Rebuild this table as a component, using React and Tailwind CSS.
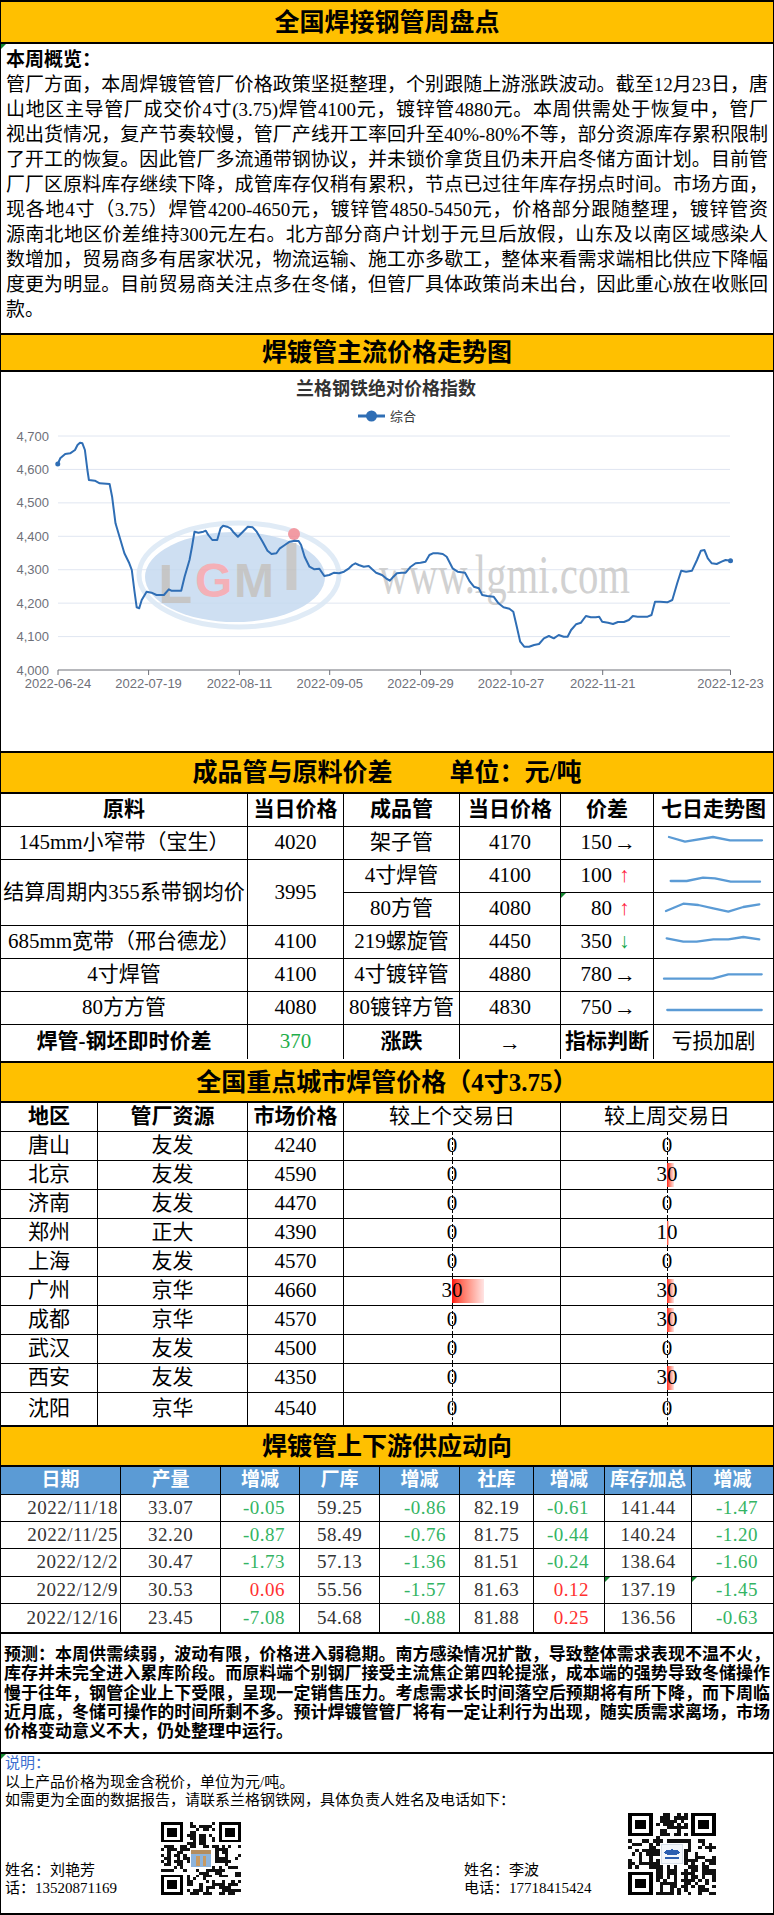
const song = "font-['Liberation_Serif','Noto_Sans_CJK_SC',serif]";

const overview = [
  '管厂方面，本周焊镀管管厂价格政策坚挺整理，个别跟随上游涨跌波动。截至12月23日，唐',
  '山地区主导管厂成交价4寸(3.75)焊管4100元，镀锌管4880元。本周供需处于恢复中，管厂',
  '视出货情况，复产节奏较慢，管厂产线开工率回升至40%-80%不等，部分资源库存累积限制',
  '了开工的恢复。因此管厂多流通带钢协议，并未锁价拿货且仍未开启冬储方面计划。目前管',
  '厂厂区原料库存继续下降，成管库存仅稍有累积，节点已过往年库存拐点时间。市场方面，',
  '现各地4寸（3.75）焊管4200-4650元，镀锌管4850-5450元，价格部分跟随整理，镀锌管资',
  '源南北地区价差维持300元左右。北方部分商户计划于元旦后放假，山东及以南区域感染人',
  '数增加，贸易商多有居家状况，物流运输、施工亦多歇工，整体来看需求端相比供应下降幅',
  '度更为明显。目前贸易商关注点多在冬储，但管厂具体政策尚未出台，因此重心放在收账回',
];

const forecast = [
  '预测：本周供需续弱，波动有限，价格进入弱稳期。南方感染情况扩散，导致整体需求表现不温不火，',
  '库存并未完全进入累库阶段。而原料端个别钢厂接受主流焦企第四轮提涨，成本端的强势导致冬储操作',
  '慢于往年，钢管企业上下受限，呈现一定销售压力。考虑需求长时间落空后预期将有所下降，而下周临',
  '近月底，冬储可操作的时间所剩不多。预计焊镀管管厂将有一定让利行为出现，随实质需求离场，市场',
];

// trace of the index line, in reference pixels (x * 2.026, y * 3)
const series = [
  [115, 402], [120, 385], [130, 372], [140, 370], [150, 360], [155, 345], [160, 338], [165, 340],
  [170, 360], [175, 420], [178, 450], [190, 452], [200, 460], [220, 462], [225, 500], [232, 580],
  [240, 620], [250, 670], [260, 700], [265, 720], [270, 780], [275, 832], [280, 835], [285, 810],
  [295, 785], [305, 788], [315, 795], [330, 795], [340, 778], [345, 782], [365, 782], [372, 740],
  [382, 690], [387, 650], [392, 605], [400, 608], [410, 605], [415, 602], [420, 615], [428, 630],
  [438, 630], [445, 595], [450, 587], [458, 590], [465, 595], [470, 605], [480, 620], [490, 605],
  [500, 590], [510, 592], [518, 605], [530, 635], [540, 662], [548, 672], [558, 670], [565, 655],
  [575, 645], [585, 635], [595, 632], [603, 633], [608, 645], [615, 680], [625, 710], [635, 718],
  [645, 716], [655, 738], [665, 735], [675, 728], [685, 730], [695, 725], [705, 715], [712, 705],
  [718, 700], [725, 705], [735, 710], [745, 708], [752, 718], [760, 728], [772, 735], [780, 745],
  [788, 752], [795, 740], [802, 730], [812, 728], [820, 728], [830, 710], [840, 700], [850, 698],
  [860, 695], [868, 675], [875, 670], [885, 670], [895, 672], [903, 680], [915, 715], [925, 725],
  [940, 728], [950, 755], [958, 770], [968, 775], [975, 795], [985, 798], [998, 800], [1008, 820],
  [1018, 832], [1030, 836], [1038, 845], [1045, 890], [1052, 935], [1060, 950], [1070, 950],
  [1080, 945], [1090, 942], [1100, 925], [1110, 918], [1120, 925], [1130, 915], [1140, 920],
  [1148, 920], [1155, 900], [1165, 883], [1175, 878], [1185, 858], [1195, 862], [1205, 862],
  [1212, 860], [1218, 875], [1230, 878], [1240, 882], [1250, 876], [1262, 876], [1272, 870],
  [1280, 858], [1290, 860], [1310, 860], [1318, 855], [1325, 815], [1335, 815], [1350, 817],
  [1360, 810], [1370, 760], [1378, 722], [1388, 725], [1400, 722], [1410, 690], [1418, 662],
  [1425, 660], [1432, 685], [1440, 700], [1450, 702], [1460, 695], [1468, 690], [1478, 692],
];

const yTicks = ['4,700', '4,600', '4,500', '4,400', '4,300', '4,200', '4,100', '4,000'];
const xTicks = [
  [57, '2022-06-24'], [147.6, '2022-07-19'], [238.4, '2022-08-11'], [328.7, '2022-09-05'],
  [419.5, '2022-09-29'], [510, '2022-10-27'], [601.7, '2022-11-21'], [729.5, '2022-12-23'],
];

const cities = [
  ['唐山', '友发', '4240', 0, 0],
  ['北京', '友发', '4590', 0, 30],
  ['济南', '友发', '4470', 0, 0],
  ['郑州', '正大', '4390', 0, 10],
  ['上海', '友发', '4570', 0, 0],
  ['广州', '京华', '4660', 30, 30],
  ['成都', '京华', '4570', 0, 30],
  ['武汉', '友发', '4500', 0, 0],
  ['西安', '友发', '4350', 0, 30],
  ['沈阳', '京华', '4540', 0, 0],
];

const supply = [
  ['2022/11/18', '33.07', '-0.05', '59.25', '-0.86', '82.19', '-0.61', '141.44', '-1.47'],
  ['2022/11/25', '32.20', '-0.87', '58.49', '-0.76', '81.75', '-0.44', '140.24', '-1.20'],
  ['2022/12/2', '30.47', '-1.73', '57.13', '-1.36', '81.51', '-0.24', '138.64', '-1.60'],
  ['2022/12/9', '30.53', '0.06', '55.56', '-1.57', '81.63', '0.12', '137.19', '-1.45'],
  ['2022/12/16', '23.45', '-7.08', '54.68', '-0.88', '81.88', '0.25', '136.56', '-0.63'],
];
const supplyPad = ['justify-end pr-[2px]', 'justify-center', 'justify-end pr-[14px]', 'justify-center', 'justify-end pr-[13px]', 'justify-center', 'justify-end pr-[15px]', 'justify-center', 'justify-end pr-[15px]'];

function Bar({ className, children }) {
  return (
    <div className={`flex items-center justify-center border-y-2 border-black bg-[#ffc000] text-[25px] font-bold leading-none ${className}`}>
      {children}
    </div>
  );
}

function C({ children, r = true, b = true, className = '' }) {
  return (
    <div className={`relative flex items-center justify-center border-black ${r ? 'border-r' : ''} ${b ? 'border-b' : ''} ${className}`}>
      {children}
    </div>
  );
}

function Tick() {
  return <span className="absolute left-0 top-0 h-0 w-0 border-r-[5px] border-t-[5px] border-r-transparent border-t-[#13862f]" />;
}

function Spark({ pts }) {
  return (
    <svg viewBox="0 0 119 32" className="h-full w-full" preserveAspectRatio="none">
      <polyline points={pts} fill="none" stroke="#5b9bd5" strokeWidth="2.3" strokeLinejoin="round" strokeLinecap="round" />
    </svg>
  );
}

function Diff({ v, dir }) {
  return (
    <div className="flex w-full items-center">
      <span className="w-[51px] text-right">{v}</span>
      {dir === 'flat' && <span className="ml-[2px] text-[22px] leading-none">→</span>}
      {dir === 'up' && <span className="ml-[7px] text-[#ff1f3d]">↑</span>}
      {dir === 'down' && <span className="ml-[7px] text-[#17a84a]">↓</span>}
    </div>
  );
}

function DataBar({ value, scale }) {
  return (
    <>
      <span className="absolute bottom-0 left-1/2 top-0 border-l border-dashed border-black" />
      {value > 0 && (
        <span
          className="absolute bottom-[2px] left-1/2 top-[2px] bg-linear-to-r from-[#ff0000] to-[#ffe4e4]"
          style={{ width: `${value * scale}px` }}
        />
      )}
      <span className="relative">{value}</span>
    </>
  );
}

function QrCode({ w, h, seed, logo }) {
  const n = 25;
  let s = seed;
  const rnd = () => {
    s = (s * 1103515245 + 12345) % 2147483648;
    return s / 2147483648;
  };
  const finder = (r, c) => (r < 8 && c < 8) || (r < 8 && c >= n - 8) || (r >= n - 8 && c < 8);
  const mods = [];
  for (let r = 0; r < n; r++) {
    for (let c = 0; c < n; c++) {
      if (!finder(r, c) && rnd() < 0.5) mods.push(<rect key={`${r}-${c}`} x={c} y={r} width="1" height="1" />);
    }
  }
  const eyes = [[0, 0], [0, n - 7], [n - 7, 0]].map(([r, c]) => (
    <g key={`${r}${c}`}>
      <rect x={c} y={r} width="7" height="7" fill="#000" />
      <rect x={c + 1} y={r + 1} width="5" height="5" fill="#fff" />
      <rect x={c + 2} y={r + 2} width="3" height="3" fill="#000" />
    </g>
  ));
  return (
    <svg width={w} height={h} viewBox="0 0 25 25" preserveAspectRatio="none" shapeRendering="crispEdges">
      <rect width="25" height="25" fill="#fff" />
      <g fill="#111">{mods}</g>
      {eyes}
      <rect x="9" y="9" width="7" height="7" fill="#fff" />
      {logo === 1 ? (
        <g>
          <rect x="9.5" y="9.5" width="6" height="6" fill="#8db4dc" />
          <rect x="9.5" y="9.5" width="6" height="1.6" fill="#b48d5e" />
          <rect x="11" y="11.5" width="1.2" height="3.5" fill="#c79a63" />
          <rect x="13" y="11.5" width="1.2" height="3.5" fill="#c79a63" />
        </g>
      ) : (
        <g>
          <rect x="9.5" y="9.5" width="6" height="6" fill="#f4f7fb" stroke="#c9d3e0" strokeWidth="0.2" />
          <ellipse cx="12.5" cy="12" rx="2.2" ry="0.9" fill="#2d5fb0" />
          <rect x="10.5" y="13.3" width="4" height="0.7" fill="#2d5fb0" />
        </g>
      )}
    </svg>
  );
}

function Chart() {
  const line = series.map(([x, y]) => `${(x / 2.026).toFixed(1)},${(y / 3 - 42).toFixed(1)}`).join(' ');
  const first = series[0];
  const last = series[series.length - 1];
  return (
    <svg width="772" height="379" viewBox="0 0 772 379" fontFamily="Liberation Sans, Noto Sans CJK SC, sans-serif">
      <text x="385" y="23" textAnchor="middle" fontSize="18" fontWeight="bold" fill="#333">兰格钢铁绝对价格指数</text>
      <line x1="357" y1="44" x2="384" y2="44" stroke="#2f6eb5" strokeWidth="3" />
      <circle cx="370.5" cy="44" r="5.5" fill="#2f6eb5" />
      <text x="389" y="49" fontSize="13" fill="#333">综合</text>
      {yTicks.map((t, i) => {
        const y = 64 + i * 33.43;
        return (
          <g key={t}>
            {i < 7 && <line x1="57" y1={y} x2="729" y2={y} stroke="#e0e6f1" strokeWidth="1" />}
            <text x="48" y={y + 4.5} textAnchor="end" fontSize="13" fill="#6e7079">{t}</text>
          </g>
        );
      })}
      <line x1="57" y1="298" x2="729.5" y2="298" stroke="#6e7079" strokeWidth="1" />
      {xTicks.map(([x, t]) => (
        <g key={t}>
          <line x1={x} y1="298" x2={x} y2="303" stroke="#6e7079" strokeWidth="1" />
          <text x={x} y="316" textAnchor="middle" fontSize="13" fill="#6e7079">{t}</text>
        </g>
      ))}
      <g opacity="0.85">
        <ellipse cx="238" cy="203" rx="100" ry="52" fill="none" stroke="#dbe8f5" strokeWidth="5" />
        <ellipse cx="234" cy="205" rx="90" ry="45" fill="#c6daf0" />
        <text fontWeight="bold">
          <tspan x="157" y="231" fontSize="56" fill="#bdbdbd">L</tspan>
          <tspan x="194" y="225" fontSize="48" fill="#f3a3ab">G</tspan>
          <tspan x="233" y="225" fontSize="48" fill="#bdbdbd">M</tspan>
          <tspan x="281" y="218" fontSize="68" fill="#c0c0c0">I</tspan>
        </text>
        <circle cx="293" cy="162" r="6" fill="#f08a94" />
        <text x="378" y="221" fontSize="54" fontFamily="Liberation Serif, serif" fill="#c9c9c9" textLength="251" lengthAdjust="spacingAndGlyphs">www.lgmi.com</text>
      </g>
      <polyline points={line} fill="none" stroke="#2f6eb5" strokeWidth="2" strokeLinejoin="round" />
      <circle cx={first[0] / 2.026} cy={first[1] / 3 - 42} r="2.5" fill="#2f6eb5" />
      <circle cx={last[0] / 2.026} cy={last[1] / 3 - 42} r="2.5" fill="#2f6eb5" />
    </svg>
  );
}

export default function App() {
  return (
    <div className={`w-[774px] border-x border-black bg-white text-black ${song}`}>
      <Bar className="h-[44px]">全国焊接钢管周盘点</Bar>

      <section className="relative h-[289px] px-[5px] pt-[3px] text-[19px] leading-[25px]">
        <Tick />
        <p className="font-bold">本周概览：</p>
        {overview.map((l) => (
          <p key={l} className="whitespace-nowrap text-justify [text-align-last:justify]">{l}</p>
        ))}
        <p>款。</p>
      </section>

      <Bar className="h-[39px]">焊镀管主流价格走势图</Bar>
      <section className="h-[379px]">
        <Chart />
      </section>

      <Bar className="h-[43px] gap-[57px]">
        <span>成品管与原料价差</span>
        <span>单位：元/吨</span>
      </Bar>
      <div className="grid h-[267px] grid-cols-[247px_96px_116px_101px_93px_119px] grid-rows-[33px_33px_33px_33px_33px_33px_33px_34px] text-[21px] whitespace-nowrap">
        <C className="font-bold">原料</C>
        <C className="font-bold">当日价格</C>
        <C className="font-bold">成品管</C>
        <C className="font-bold">当日价格</C>
        <C className="font-bold">价差</C>
        <C r={false} className="font-bold">七日走势图</C>

        <C>145mm小窄带（宝生）</C>
        <C>4020</C>
        <C>架子管</C>
        <C>4170</C>
        <C><Diff v="150" dir="flat" /></C>
        <C r={false}><Spark pts="15,10 31,14.7 59,10 76,13.3 108,13.3" /></C>

        <C className="row-span-2">结算周期内355系带钢均价</C>
        <C className="row-span-2">3995</C>
        <C>4寸焊管</C>
        <C>4100</C>
        <C><Diff v="100" dir="up" /></C>
        <C r={false}><Spark pts="16.7,21 32.7,21 49,17.7 61,18.3 76.7,21.7 106,21.7" /></C>

        <C>80方管</C>
        <C>4080</C>
        <C><Tick /><Diff v="80" dir="up" /></C>
        <C r={false}><Spark pts="12,18 29.3,10.7 44.3,12 59.3,15.3 74.3,18.7 89.3,14 105.3,11.3" /></C>

        <C>685mm宽带（邢台德龙）</C>
        <C>4100</C>
        <C>219螺旋管</C>
        <C>4450</C>
        <C><Diff v="350" dir="down" /></C>
        <C r={false}><Spark pts="12.7,12.3 29.3,15.7 42.7,15.7 59.3,13.3 74.3,13.3 89.3,11 105.3,13.3" /></C>

        <C>4寸焊管</C>
        <C>4100</C>
        <C>4寸镀锌管</C>
        <C>4880</C>
        <C><Diff v="780" dir="flat" /></C>
        <C r={false}><Spark pts="10,19.7 58.7,19.7 74.3,15.3 107.7,15.3" /></C>

        <C>80方方管</C>
        <C>4080</C>
        <C>80镀锌方管</C>
        <C>4830</C>
        <C><Diff v="750" dir="flat" /></C>
        <C r={false}><Spark pts="13.3,18 107.7,18" /></C>

        <C b={false} className="font-bold">焊管-钢坯即时价差</C>
        <C b={false} className="text-[#1fae4b]">370</C>
        <C b={false} className="font-bold">涨跌</C>
        <C b={false} className="text-[22px]">→</C>
        <C b={false} className="font-bold">指标判断</C>
        <C b={false} r={false}>亏损加剧</C>
      </div>

      <Bar className="h-[42px]">全国重点城市焊管价格（4寸3.75）</Bar>
      <div className="grid h-[322px] grid-cols-[97px_150px_96px_217px_212px] grid-rows-[29px_29px_29px_29px_29px_29px_29px_29px_29px_29px_32px] text-[21px]">
        <C className="font-bold">地区</C>
        <C className="font-bold">管厂资源</C>
        <C className="font-bold">市场价格</C>
        <C>较上个交易日</C>
        <C r={false}>较上周交易日</C>
        {cities.map(([city, mill, price, d1, d2], i) => {
          const b = i < cities.length - 1;
          return [
            <C key={`${city}a`} b={b}>{city}</C>,
            <C key={`${city}b`} b={b}>{mill}</C>,
            <C key={`${city}c`} b={b}>{price}</C>,
            <C key={`${city}d`} b={b}><DataBar value={d1} scale={32 / 30} /></C>,
            <C key={`${city}e`} b={b} r={false}><DataBar value={d2} scale={6.5 / 30} /></C>,
          ];
        })}
      </div>

      <Bar className="h-[42px]">焊镀管上下游供应动向</Bar>
      <div className="grid h-[165px] grid-cols-[120px_100px_79px_80px_80px_74px_71px_87px_81px] grid-rows-[28px_27px_27px_28px_27px_28px] text-[19px]">
        {['日期', '产量', '增减', '厂库', '增减', '社库', '增减', '库存加总', '增减'].map((h, i) => (
          <C key={`h${i}`} r={i < 8} className="border-b-black bg-[#5b9bd5] font-bold text-white">{h}</C>
        ))}
        {supply.map((row, ri) =>
          row.map((v, ci) => {
            const delta = ci === 2 || ci === 4 || ci === 6 || ci === 8;
            const color = delta ? (v.startsWith('-') ? 'text-[#34b463]' : 'text-[#ff3030]') : 'text-[#333]';
            return (
              <C key={`${ri}-${ci}`} r={ci < 8} b={ri < 4} className={`tracking-[0.5px] ${supplyPad[ci]} ${color}`}>
                {ri === 3 && (ci === 7 || ci === 8) && <Tick />}
                {v}
              </C>
            );
          })
        )}
      </div>

      <section className="h-[122px] border-y-2 border-black px-[3px] pt-[11px] text-[17px] font-bold leading-[19.3px]">
        {forecast.map((l) => (
          <p key={l} className="whitespace-nowrap text-justify [text-align-last:justify]">{l}</p>
        ))}
        <p>价格变动意义不大，仍处整理中运行。</p>
      </section>

      <section className="relative h-[161px] border-b-2 border-black text-[15px] leading-[18.5px]">
        <Tick />
        <div className="px-[4px]">
          <p className="text-[#3c6fd0]">说明：</p>
          <p>以上产品价格为现金含税价，单位为元/吨。</p>
          <p>如需更为全面的数据报告，请联系兰格钢铁网，具体负责人姓名及电话如下：</p>
        </div>
        <div className="flex h-[88px] items-end pl-[4px]">
          <div className="mb-px w-[156px] leading-[18px]">
            <p>姓名：刘艳芳</p>
            <p>话：13520871169</p>
          </div>
          <div className="mb-[3px]">
            <QrCode w={80} h={73} seed={7} logo={1} />
          </div>
          <div className="w-[223px]" />
          <div className="mb-px w-[164px] leading-[18px]">
            <p>姓名：李波</p>
            <p>电话：17718415424</p>
          </div>
          <div className="mb-[3px]">
            <QrCode w={88} h={82} seed={31} logo={2} />
          </div>
        </div>
      </section>
    </div>
  );
}
